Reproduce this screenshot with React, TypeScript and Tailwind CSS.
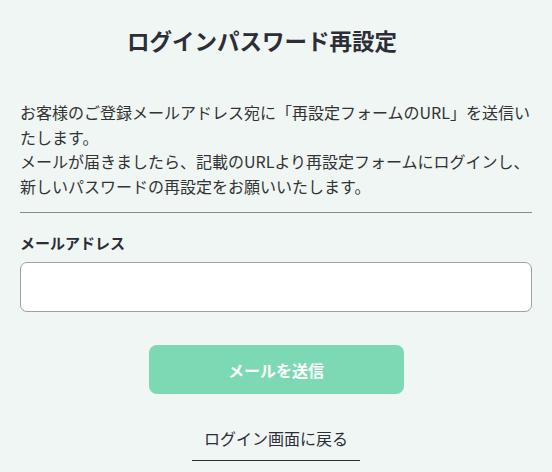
import React from 'react';

export default function App() {
  return (
    <div
      className="min-h-screen w-full bg-[#f0f6f3] text-[#333] px-5"
      style={{ fontFamily: '"Noto Sans CJK JP", "Noto Sans", sans-serif' }}
    >
      <h1 className="pt-[24px] pr-7 text-center text-[22.5px] leading-[32px] font-bold text-[#2d2d38]">
        ログインパスワード再設定
      </h1>
      <p className="mt-[44px] text-[16px] leading-[24.5px] text-[#333]">
        お客様のご登録メールアドレス宛に「再設定フォームのURL」を送信いたします。
        <br />
        メールが届きましたら、記載のURLより再設定フォームにログインし、新しいパスワードの再設定をお願いいたします。
      </p>
      <div className="mt-[14px] h-px bg-[#888]" />
      <label className="block mt-[18px] text-[15px] leading-[24px] font-bold text-[#2d2d38]">
        メールアドレス
      </label>
      <input
        type="email"
        className="mt-[7px] block w-full h-[50px] rounded-[7px] border border-[#a0a0a0] bg-white px-3 outline-none"
      />
      <div className="flex justify-center mt-[33px]">
        <button className="w-[255px] h-[49px] rounded-[8px] bg-[#7dd9b3] text-white text-[16px] font-bold">
          メールを送信
        </button>
      </div>
      <div className="flex justify-center mt-[32px]">
        <a className="block w-[168px] text-center text-[16px] leading-[24px] text-[#2d2d38] pb-[10px] border-b border-[#2d2d38]">
          ログイン画面に戻る
        </a>
      </div>
    </div>
  );
}
